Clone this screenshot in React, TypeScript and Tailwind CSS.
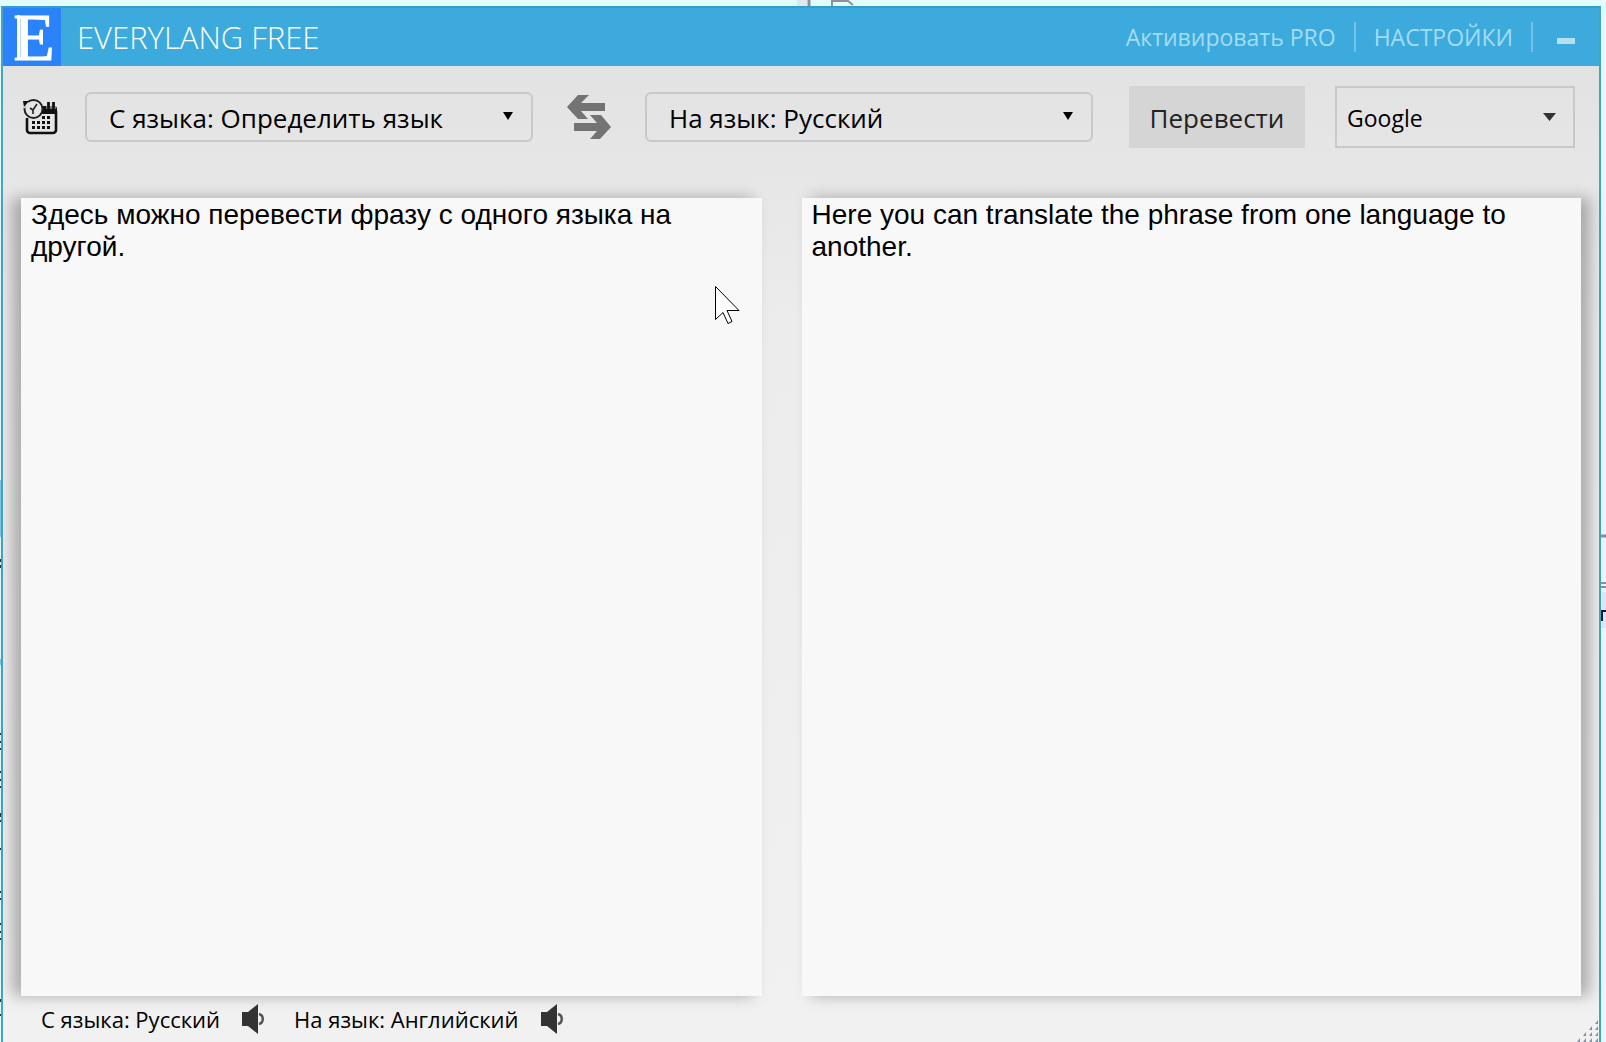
import React, { useState } from "react";

interface LanguageSelectProps {
  label: string;
  prefix: string;
  options: string[];
}

function LanguageSelect({ label, prefix, options }: LanguageSelectProps) {
  return (
    <div className="relative min-w-0 flex-1">
      <select
        aria-label={label}
        className="h-[50px] w-full appearance-none rounded-md border-2 border-[#c9c9c9] bg-transparent pl-[22px] pr-12 pt-[2px] text-[26px] text-black outline-none"
      >
        {options.map((option) => (
          <option key={option}>
            {prefix} {option}
          </option>
        ))}
      </select>
      <svg
        viewBox="0 0 10 8"
        className="pointer-events-none absolute right-5 top-5 h-2 w-[10px]"
      >
        <path d="M0 0h10L5 8z" fill="#000" />
      </svg>
    </div>
  );
}

function HistoryIcon() {
  return (
    <svg viewBox="0 0 36 36" className="h-9 w-9" fill="none">
      {/* Calendar */}
      <path d="M4 19v12a3 3 0 0 0 3 3h23a3 3 0 0 0 3-3V12" stroke="#111" strokeWidth="2.6" />
      <path d="M19 7h12a3 3 0 0 1 3 3v5H19z" fill="#111" />
      <path d="M25.500 5v5M30.500 5v5" stroke="#e2e2e2" strokeWidth="4" />
      <path d="M25.500 3v7M30.500 3v7" stroke="#111" strokeWidth="2.800" />
      <g fill="#111">
        <path d="M19 17h3v3h-3zM24 17h3v3h-3z" />
        <path d="M9 22h3v3H9zM14 22h3v3h-3zM19 22h3v3h-3zM24 22h3v3h-3z" />
        <path d="M9 27h3v3H9zM14 27h3v3h-3zM19 27h3v3h-3zM24 27h3v3h-3z" />
      </g>
      {/* Clock with the rewind arrow */}
      <circle cx="10.500" cy="10" r="9" fill="#e6e6e6" stroke="#222" strokeWidth="2" />
      <path d="M5 3L1 9" stroke="#e2e2e2" strokeWidth="2" />
      <path d="M0 2h6l-5 6z" fill="#111" />
      <path d="M14 5l-4 6v4M10 11L7 9" stroke="#222" strokeWidth="1.600" />
    </svg>
  );
}

function SpeakerIcon() {
  return (
    <svg viewBox="0 0 26 30" className="h-[30px] w-[26px]">
      <path d="M0 8h6l10-8v30L6 22H0z" fill="#333" />
      <path d="M17 10c5 1 5 9 0 10" fill="none" stroke="#555" strokeWidth="2.500" />
    </svg>
  );
}

function ResizeGrip() {
  const dots = [
    [18, 0],
    [12, 6], [18, 6],
    [6, 12], [12, 12], [18, 12],
    [0, 18], [6, 18], [12, 18], [18, 18],
  ];
  return (
    <svg viewBox="0 0 22 22" className="h-[22px] w-[22px]">
      {dots.map(([x, y]) => (
        <path key={`${x}-${y}`} d={`M${x + 3} ${y}v4h-3z`} fill="#8290a3" />
      ))}
    </svg>
  );
}

export default function App() {
  const [source, setSource] = useState("Здесь можно перевести фразу с одного языка на другой.");

  return (
    <div className="relative flex min-h-screen flex-col bg-[#e2fbff] pl-px pr-[5px] pt-[6px] font-['Open_Sans','Noto_Sans',sans-serif] text-black">
      {/* Edges of the windows behind */}
      <svg viewBox="0 0 70 6" className="absolute left-[797px] top-0 h-[6px] w-[70px]" fill="none">
        <path d="M0 0h10v6H0z" fill="#dde9ee" />
        <path d="M12 0v6" stroke="#8d8f94" strokeWidth="3" />
        <path d="M35 6V1h16l5 4" stroke="#8d9397" strokeWidth="2" />
      </svg>
      <svg viewBox="0 0 5 110" className="absolute right-0 top-[530px] h-[110px] w-[5px]" fill="none">
        <path d="M0 6h5" stroke="#85909b" strokeWidth="3" />
        <path d="M0 53h5M0 57h5" stroke="#85909b" strokeWidth="2" />
        <path d="M0 62h5v36H0z" fill="#d5e9f7" />
        <path d="M1 91V81h4" stroke="#0b1c3c" strokeWidth="2" />
      </svg>
      <svg viewBox="0 0 1 560" className="absolute left-0 top-[475px] h-[560px] w-px">
        <path d="M0 5h1v57H0zM0 184h1v6H0z" fill="#7cc8e8" />
        <path
          d="M0 84h1v3H0zM0 90h1v3H0zM0 258h1v2H0zM0 266h1v2H0zM0 273h1v2H0zM0 296h1v2H0zM0 304h1v2H0zM0 311h1v2H0zM0 338h1v4H0zM0 345h1v2H0zM0 373h1v2H0zM0 416h1v2H0zM0 423h1v2H0zM0 448h1v2H0zM0 456h1v2H0zM0 463h1v2H0zM0 524h1v3H0zM0 539h1v2H0z"
          fill="#12384a"
        />
      </svg>

      <div className="flex flex-1 flex-col border-x-2 border-t-2 border-x-[#4ba3ba] border-t-[#2f9fd0] bg-linear-to-b from-[#e0e0e0] via-[#ececec] via-30% to-[#f1f1f1]">
        <header className="flex h-[58px] items-center bg-[#3caadc]">
          <div className="relative flex h-[58px] w-[58px] items-center justify-center bg-[#2b82fb] pl-1">
            <span className="font-['Liberation_Serif',serif] text-[68px] leading-[58px] text-white [-webkit-text-stroke:1px_white]">E</span>
            <span className="absolute left-[14px] top-[7px] h-[43px] w-[3px] bg-white" />
          </div>
          <h1 className="ml-4 text-[31px] font-light text-white">EVERYLANG FREE</h1>
          <nav className="ml-auto flex items-center text-[23px] text-[#a3dcf5]">
            <a href="#pro">Активировать PRO</a>
            <span className="mx-[18px] h-[30px] w-[2px] bg-[#74c3e7]" />
            <a href="#settings">НАСТРОЙКИ</a>
            <span className="mx-[18px] h-[30px] w-[2px] bg-[#74c3e7]" />
            <button type="button" aria-label="Свернуть" className="mr-6 flex h-[30px] w-6 items-center justify-end pt-2">
              <span className="h-[6px] w-[18px] bg-[#b4e0f2]" />
            </button>
          </nav>
        </header>

        <div className="flex h-[102px] items-center pl-5 pr-6">
          <button type="button" aria-label="История" className="mr-[26px]">
            <HistoryIcon />
          </button>
          <LanguageSelect label="С языка" prefix="С языка:" options={["Определить язык", "Русский", "Английский"]} />
          <button type="button" aria-label="Поменять языки" className="mx-[34px]">
            <svg viewBox="0 0 44 44" className="h-11 w-11" fill="#737373">
              <path d="M0 12L11 0h11l-8 8h24v8H14l7 8H11z" />
              <path d="M44 32L33 44H23l7-8H7v-8h23l-7-8h11z" />
            </svg>
          </button>
          <LanguageSelect label="На язык" prefix="На язык:" options={["Русский", "Английский"]} />
          <button type="button" className="ml-9 h-[62px] w-[176px] bg-[#d5d5d5] pt-[2px] text-[26px] text-[#222]">
            Перевести
          </button>
          <div className="relative ml-[30px] w-[240px]">
            <select
              aria-label="Переводчик"
              className="h-[62px] w-full appearance-none border-2 border-[#c9c9c9] bg-transparent pl-[10px] pr-12 pt-[2px] text-[23px] text-black outline-none"
            >
              <option>Google</option>
              <option>Bing</option>
            </select>
            <svg viewBox="0 0 13 8" className="pointer-events-none absolute right-[19px] top-[27px] h-2 w-[13px]">
              <path d="M0 0h13L6.500 8z" fill="#333" />
            </svg>
          </div>
        </div>

        <main className="flex flex-1 gap-10 px-[18px] pt-[30px]">
          <textarea
            aria-label="Исходный текст"
            value={source}
            onChange={(e) => setSource(e.target.value)}
            spellCheck={false}
            className="min-w-0 flex-[37] resize-none bg-[#f8f8f8] px-[10px] pt-px font-['Liberation_Sans',sans-serif] text-[28px] leading-8 shadow-[-9px_0_14px_rgba(0,0,0,0.28)] outline-none"
          />
          <textarea
            aria-label="Перевод"
            readOnly
            value="Here you can translate the phrase from one language to another."
            spellCheck={false}
            className="min-w-0 flex-[39] resize-none bg-[#f8f8f8] px-[10px] pt-px font-['Liberation_Sans',sans-serif] text-[28px] leading-8 shadow-[9px_0_14px_rgba(0,0,0,0.28)] outline-none"
          />
        </main>

        <footer className="flex h-[46px] items-center pl-[38px] text-[22px]">
          <span>С языка: Русский</span>
          <button type="button" aria-label="Прослушать оригинал" className="ml-[22px]">
            <SpeakerIcon />
          </button>
          <span className="ml-[26px]">На язык: Английский</span>
          <button type="button" aria-label="Прослушать перевод" className="ml-[22px]">
            <SpeakerIcon />
          </button>
          <div className="ml-auto self-end">
            <ResizeGrip />
          </div>
        </footer>
      </div>

      {/* Mouse pointer */}
      <svg viewBox="0 0 26 40" className="pointer-events-none absolute left-[715px] top-[286px] h-10 w-[26px]">
        <path d="M.5.5v33l7.500-7 5 11 4-2-5-11h12z" fill="#fff" stroke="#000" />
      </svg>
    </div>
  );
}
